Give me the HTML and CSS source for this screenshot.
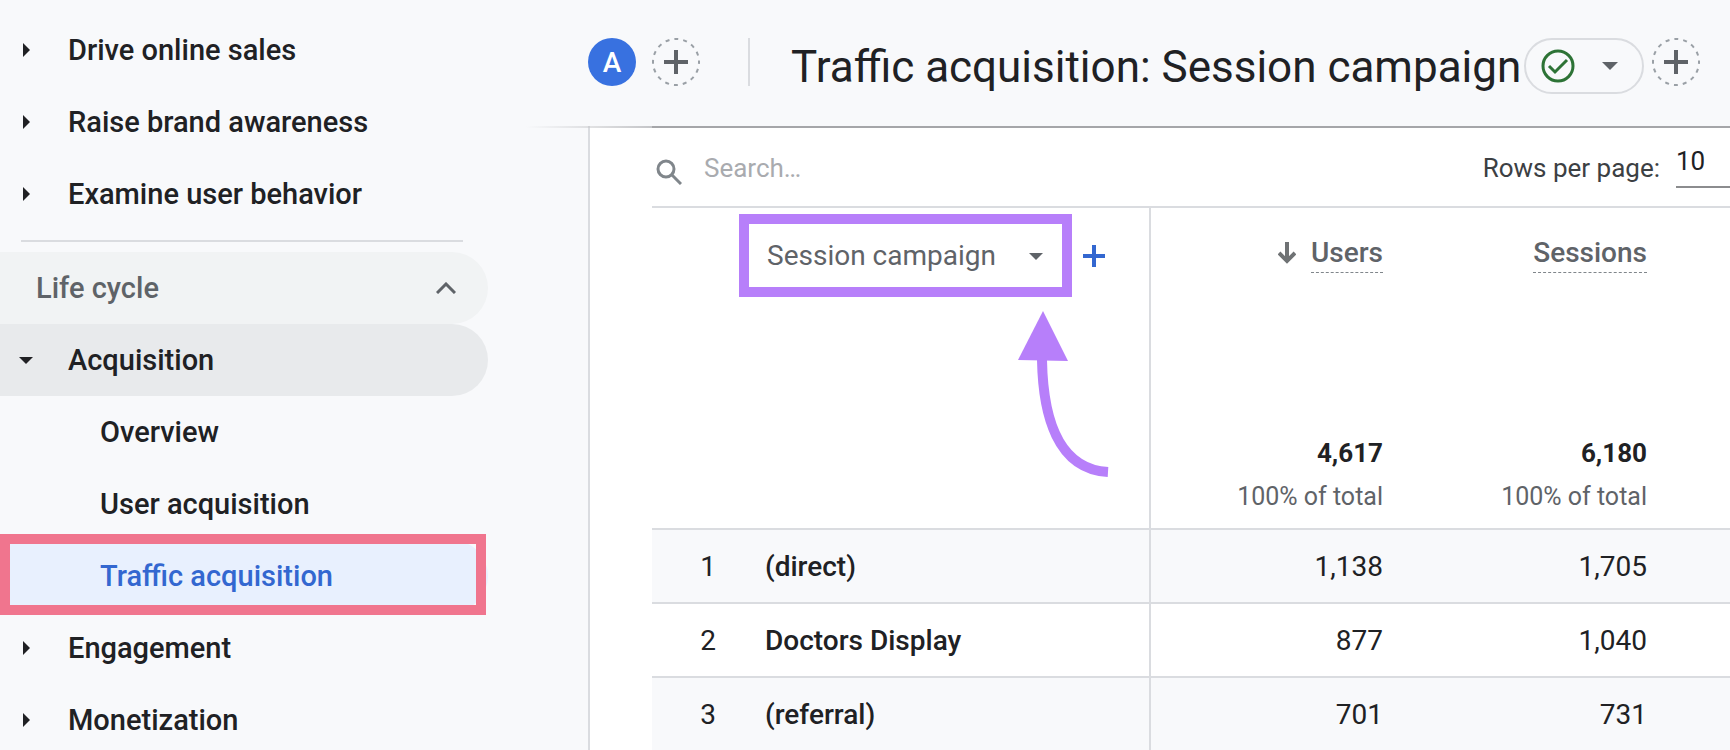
FILE: index.html
```
<!DOCTYPE html>
<html lang="en">
<head>
    <meta charset="UTF-8">
    <meta name="viewport" content="width=device-width, initial-scale=1.0">
    <title>Traffic acquisition: Session campaign</title>
    <link rel="stylesheet" href="styles.css">
</head>
<body>
    <div class="app">
        <nav class="sidebar">
            <button class="nav-item"><svg class="caret" viewBox="0 0 16 16"><path d="M5 1l7 7-7 7z"/></svg>Drive online sales</button>
            <button class="nav-item"><svg class="caret" viewBox="0 0 16 16"><path d="M5 1l7 7-7 7z"/></svg>Raise brand awareness</button>
            <button class="nav-item"><svg class="caret" viewBox="0 0 16 16"><path d="M5 1l7 7-7 7z"/></svg>Examine user behavior</button>
            <hr class="nav-divider">
            <button class="nav-item nav-section">Life cycle<svg class="chevron" viewBox="0 0 20 12"><path d="M1 11l9-9 9 9"/></svg></button>
            <button class="nav-item nav-open"><svg class="caret" viewBox="0 0 16 16"><path d="M1 5h14l-7 7z"/></svg>Acquisition</button>
            <a class="nav-item nav-sub" href="#">Overview</a>
            <a class="nav-item nav-sub" href="#">User acquisition</a>
            <a class="nav-item nav-sub nav-active" href="#">Traffic acquisition</a>
            <button class="nav-item"><svg class="caret" viewBox="0 0 16 16"><path d="M5 1l7 7-7 7z"/></svg>Engagement</button>
            <button class="nav-item"><svg class="caret" viewBox="0 0 16 16"><path d="M5 1l7 7-7 7z"/></svg>Monetization</button>
        </nav>

        <main class="main">
            <header class="header">
                <button class="avatar">A</button>
                <button class="add" aria-label="Add comparison">
                    <svg viewBox="0 0 48 48"><circle cx="24" cy="24" r="23"/><path d="M24 12v24M12 24h24"/></svg>
                </button>
                <span class="header-divider"></span>
                <h1 class="title">Traffic acquisition: Session campaign</h1>
                <button class="status" aria-label="Data quality">
                    <svg class="status-check" viewBox="0 0 34 34"><circle cx="17" cy="17" r="15"/><path d="M8 17l6 6 12-12"/></svg>
                    <svg class="status-caret" viewBox="0 0 16 8"><path d="M0 0h16l-8 8z"/></svg>
                </button>
                <button class="add" aria-label="Add filter">
                    <svg viewBox="0 0 48 48"><circle cx="24" cy="24" r="23"/><path d="M24 12v24M12 24h24"/></svg>
                </button>
            </header>

            <section class="report">
                <div class="toolbar">
                    <svg class="search-icon" viewBox="0 0 26 26"><circle cx="10" cy="10" r="8"/><path d="M15 15l10 10"/></svg>
                    <input class="search" type="text" placeholder="Search…" aria-label="Search">
                    <label class="rows-label" for="rows">Rows per page:</label>
                    <select class="rows" id="rows">
                        <option>10</option>
                        <option>25</option>
                        <option>50</option>
                    </select>
                </div>

                <table class="table">
                    <colgroup>
                        <col class="col-index">
                        <col class="col-name">
                        <col>
                        <col class="col-last">
                    </colgroup>
                    <thead>
                        <tr>
                            <th class="dimension" colspan="2">
                                <div class="dimension-bar">
                                    <div class="dimension-box">
                                        <select class="dimension-select" aria-label="Dimension">
                                            <option>Session campaign</option>
                                            <option>Session source</option>
                                        </select>
                                        <svg class="dimension-caret" viewBox="0 0 14 7"><path d="M0 0h14l-7 7z"/></svg>
                                    </div>
                                    <button class="dimension-add" aria-label="Add dimension">
                                        <svg viewBox="0 0 22 22"><path d="M11 0v22M0 11h22"/></svg>
                                    </button>
                                    <svg class="pointer" viewBox="0 0 100 176">
                                        <path class="pointer-line" d="M32 55C33 110 47 164 98 167"/>
                                        <path class="pointer-head" d="M33 6L8 55l50 1z"/>
                                    </svg>
                                </div>
                            </th>
                            <th class="metric">
                                <div class="metric-head">
                                    <svg class="sort" viewBox="0 0 18 22"><path d="M9 0v19M1 11l8 8 8-8"/></svg>
                                    <span class="metric-name">Users</span>
                                </div>
                                <div class="metric-total">4,617</div>
                                <div class="metric-share">100% of total</div>
                            </th>
                            <th class="metric">
                                <div class="metric-head">
                                    <span class="metric-name">Sessions</span>
                                </div>
                                <div class="metric-total">6,180</div>
                                <div class="metric-share">100% of total</div>
                            </th>
                        </tr>
                    </thead>
                    <tbody>
                        <tr>
                            <td class="index">1</td>
                            <td class="name">(direct)</td>
                            <td class="value">1,138</td>
                            <td class="value">1,705</td>
                        </tr>
                        <tr>
                            <td class="index">2</td>
                            <td class="name">Doctors Display</td>
                            <td class="value">877</td>
                            <td class="value">1,040</td>
                        </tr>
                        <tr>
                            <td class="index">3</td>
                            <td class="name">(referral)</td>
                            <td class="value">701</td>
                            <td class="value">731</td>
                        </tr>
                    </tbody>
                </table>
            </section>
        </main>
    </div>
</body>
</html>
```
FILE: styles.css
```
* {
    box-sizing: border-box;
}
body {
    margin: 0;
    background-color: #f8f9fb;
    color: #202124;
    font-family: Roboto, "Liberation Sans", sans-serif;
    font-size: 28px;
}
button, input, select {
    font: inherit;
    color: inherit;
    background: none;
    border: none;
    margin: 0;
    padding: 0;
}
button {
    cursor: pointer;
}
svg {
    display: block;
    flex-shrink: 0;
    fill: none;
}
.app {
    display: flex;
    height: 100vh;
    overflow: hidden;
}

/* sidebar */
.sidebar {
    width: 588px;
    flex-shrink: 0;
    padding: 14px 100px 0 0;
}
.nav-item {
    display: flex;
    align-items: center;
    width: 100%;
    height: 72px;
    padding-left: 18px;
    gap: 34px;
    border-radius: 0 36px 36px 0;
    font-size: 29px;
    font-weight: 500;
    text-decoration: none;
    color: #202124;
}
.caret {
    width: 16px;
    height: 16px;
    fill: #202124;
}
.nav-divider {
    height: 2px;
    margin: 10px 25px 10px 21px;
    border: none;
    background-color: #dadce0;
}
.nav-section {
    justify-content: space-between;
    padding: 0 32px 0 36px;
    background-color: #f1f3f4;
    color: #5f6368;
}
.chevron {
    width: 20px;
    height: 12px;
    stroke: #5f6368;
    stroke-width: 3;
}
.nav-open {
    background-color: #e8eaec;
}
.nav-sub {
    padding-left: 100px;
}
.nav-active {
    position: relative;
    background-color: #e8f0fe;
    color: #3367d0;
}
.nav-active::after {
    content: "";
    position: absolute;
    inset: -6px 2px -3px 0;
    border: 10px solid #f0758e;
}

/* header */
.main {
    display: flex;
    flex-direction: column;
    flex: 1;
    min-width: 0;
}
.header {
    position: relative;
    display: flex;
    align-items: flex-start;
    flex-shrink: 0;
    height: 126px;
    padding: 38px 30px 0 0;
}
.header::after {
    content: "";
    position: absolute;
    left: -62px;
    right: 0;
    top: 100%;
    height: 2px;
    background: linear-gradient(to right, transparent, #c4c5c8 126px, #a5a6a9 126px);
}
.avatar {
    width: 48px;
    height: 48px;
    border-radius: 50%;
    background-color: #3871e0;
    color: #fff;
    font-weight: 500;
}
.add {
    width: 48px;
    height: 48px;
    flex-shrink: 0;
}
.avatar + .add {
    margin-left: 16px;
}
.add circle {
    stroke: #9aa0a6;
    stroke-width: 2;
    stroke-dasharray: 4 5;
    stroke-dashoffset: 2;
}
.add path {
    stroke: #5f6368;
    stroke-width: 4;
}
.header-divider {
    width: 2px;
    height: 48px;
    margin-left: 48px;
    background-color: #dadce0;
}
.title {
    margin: 0 0 0 41px;
    font-size: 44px;
    line-height: 58px;
    font-weight: 400;
    white-space: nowrap;
}
.status {
    display: flex;
    align-items: center;
    justify-content: space-between;
    width: 120px;
    height: 56px;
    margin: 0 8px 0 auto;
    padding: 0 24px 0 15px;
    border: 2px solid #dadce0;
    border-radius: 28px;
    flex-shrink: 0;
}
.status-check {
    width: 34px;
    height: 34px;
    stroke: #2d7336;
    stroke-width: 3;
}
.status-caret {
    width: 16px;
    height: 8px;
    fill: #5f6368;
}

/* report */
.report {
    flex: 1;
    padding-left: 62px;
    border-left: 2px solid #dadce0;
    background-color: #fff;
}
.toolbar {
    display: flex;
    align-items: flex-start;
    height: 82px;
    padding-top: 14px;
    border-bottom: 2px solid #dadce0;
    font-size: 26px;
    line-height: 56px;
}
.search-icon {
    width: 26px;
    height: 26px;
    margin: 19px 22px 0 4px;
    stroke: #80868b;
    stroke-width: 3;
}
.search {
    flex: 1;
    min-width: 0;
    height: 56px;
    outline: none;
}
.search::placeholder {
    color: #a9abaf;
    opacity: 1;
}
.rows-label {
    color: #3c4043;
}
.rows {
    appearance: none;
    width: 54px;
    height: 48px;
    margin-left: 16px;
    padding-bottom: 4px;
    border-bottom: 2px solid #8b8c8e;
    line-height: 42px;
}

/* table */
.table {
    width: 100%;
    table-layout: fixed;
    border-collapse: separate;
    border-spacing: 0;
}
.col-index {
    width: 113px;
}
.col-name {
    width: 386px;
}
.col-last {
    width: 332px;
}
.table th {
    height: 322px;
    padding: 0;
    vertical-align: top;
    border-bottom: 2px solid #dadce0;
    font-weight: 400;
}
.table .dimension {
    border-right: 2px solid #dadce0;
}
.dimension-bar {
    position: relative;
    display: flex;
    align-items: center;
    gap: 11px;
    padding: 6px 0 0 87px;
}
.dimension-box {
    position: relative;
    width: 333px;
    border: 10px solid #b77ffa;
}
.dimension-select {
    appearance: none;
    display: block;
    width: 100%;
    height: 63px;
    padding-left: 18px;
    color: #5f6368;
}
.dimension-caret {
    position: absolute;
    right: 19px;
    top: 29px;
    width: 14px;
    height: 7px;
    fill: #5f6368;
    pointer-events: none;
}
.dimension-add svg {
    width: 22px;
    height: 22px;
    stroke: #3367d0;
    stroke-width: 4;
}
/* curved arrow under the dimension picker */
.pointer {
    position: absolute;
    left: 358px;
    top: 97px;
    width: 100px;
    height: 176px;
}
.pointer-line {
    stroke: #b77ffa;
    stroke-width: 10;
}
.pointer-head {
    fill: #b77ffa;
}
.table .metric {
    padding: 25px 15px 0 0;
    text-align: right;
}
.table .metric:last-child {
    padding-right: 83px;
}
.metric-head {
    display: flex;
    justify-content: flex-end;
    align-items: center;
    gap: 15px;
    height: 40px;
    margin-bottom: 160px;
    color: #5f6368;
    font-weight: 500;
}
.metric-name {
    height: 40px;
    line-height: 40px;
    border-bottom: 1px dashed #80868b;
}
.sort {
    width: 18px;
    height: 22px;
    stroke: #6f7274;
    stroke-width: 4;
}
.metric-total {
    font-size: 26px;
    font-weight: 700;
    line-height: 40px;
}
.metric-share {
    margin-top: 8px;
    font-size: 25px;
    line-height: 32px;
    color: #5f6368;
}
.table td {
    height: 74px;
    padding: 0;
    border-bottom: 2px solid #dadce0;
}
.table tbody tr:nth-child(odd) {
    background-color: #f8f9fb;
}
.table .index {
    padding-right: 49px;
    text-align: right;
}
.table .name {
    border-right: 2px solid #dadce0;
    font-weight: 500;
}
.table .value {
    padding-right: 15px;
    text-align: right;
}
.table .value:last-child {
    padding-right: 83px;
}
```
